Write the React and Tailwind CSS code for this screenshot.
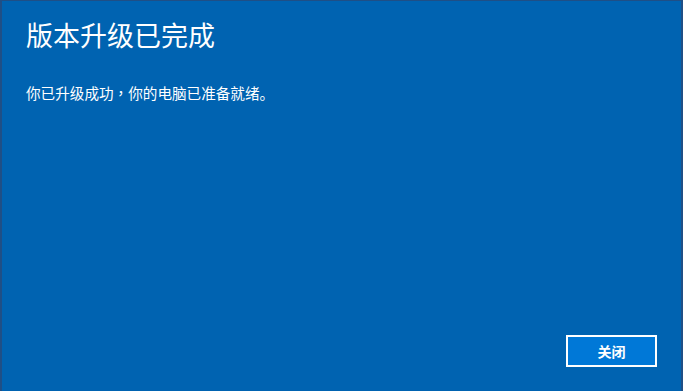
export default function App() {
  return (
    <div
      className="w-[683px] h-[391px] bg-[#0063b1] border-l-2 border-t border-r-2 border-[#1f4f86] flex flex-col text-white"
      style={{ fontFamily: '"Noto Sans CJK SC", "Noto Sans", sans-serif' }}
    >
      <div className="pl-[24px] pt-[16px]">
        <h1 className="text-[27px] leading-[36px] font-normal">版本升级已完成</h1>
        <p className="mt-[30px] text-[14.6px] leading-[20px]">
          你已升级成功<span style={{ fontFamily: '"Noto Sans CJK TC", sans-serif' }}>，</span>你的电脑已准备就绪。
        </p>
      </div>
      <div className="mt-auto flex justify-end pr-[24px] pb-[24px]">
        <button className="w-[91px] h-[32px] border-2 border-white bg-[#0078d7] text-[14px] font-bold text-white">
          关闭
        </button>
      </div>
    </div>
  );
}
